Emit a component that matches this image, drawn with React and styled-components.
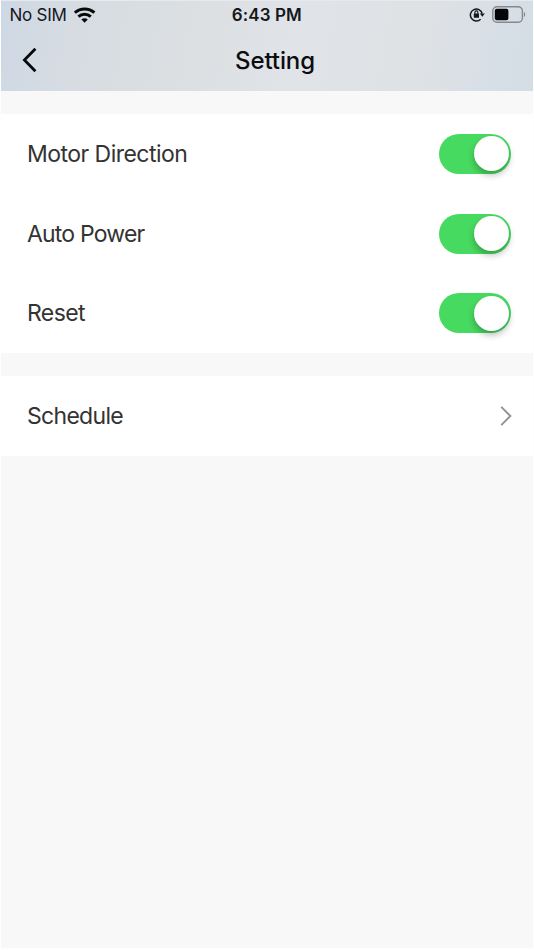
import React, { useState } from 'react';
import styled, { createGlobalStyle } from 'styled-components';

const GlobalStyle = createGlobalStyle`
  * {
    box-sizing: border-box;
  }

  body {
    margin: 0;
    background-color: #fefefe;
    font-family: Inter, Roboto, sans-serif;
  }
`

const Page = styled.div`
  height: 950px;
  padding: 0 1px 2px;
  display: flex;
  flex-direction: column;
`

const Header = styled.header`
  height: 91px;
  flex-shrink: 0;
  border-top: 1px solid #e6eaed;
  background: linear-gradient(100deg, #ced8e4 0%, #d6dce2 14%, #dbdfe2 35%, #e0e3e7 55%, #dfe2e5 78%, #d6dee6 93%, #d4dce4 100%);
`

const StatusBar = styled.div`
  height: 28px;
  padding: 0 7px 0 8.5px;
  display: grid;
  grid-template-columns: 1fr auto 1fr;
  align-items: center;
  color: #14171b;
`

const StatusGroup = styled.div`
  display: flex;
  align-items: center;
  justify-content: ${(props) => (props.$end ? 'flex-end' : 'flex-start')};
  gap: 7px;

  svg {
    margin-bottom: 1px;
  }
`

const Carrier = styled.span`
  font-size: 17px;
  line-height: 28px;
  letter-spacing: -0.25px;
`

const Clock = styled.span`
  margin-right: 2px;
  font-size: 17px;
  font-weight: 600;
  line-height: 28px;
  letter-spacing: 0.1px;
`

const NavBar = styled.div`
  height: 62px;
  padding: 0 20px;
  display: grid;
  grid-template-columns: 32px 1fr 16px;
  align-items: center;
`

const BackButton = styled.button`
  width: 20px;
  height: 30px;
  padding: 0;
  border: none;
  background: none;
  cursor: pointer;

  svg {
    display: block;
  }
`

const Title = styled.h1`
  margin: 2px 0 0;
  font-size: 24px;
  font-weight: 500;
  line-height: 30px;
  letter-spacing: -0.1px;
  text-align: center;
  color: #0b0d10;
`

const Content = styled.main`
  flex: 1;
  padding-top: 23px;
  display: flex;
  flex-direction: column;
  gap: 23px;
  background-color: #f8f8f8;
`

const Group = styled.section`
  background-color: #fff;
`

const Row = styled.div`
  height: ${(props) => props.$height || '79.7px'};
  padding: 0 22px 0 26px;
  display: flex;
  align-items: center;
  justify-content: space-between;
`

const Label = styled.span`
  font-size: 23px;
  line-height: 30px;
  letter-spacing: ${(props) => props.$spacing || '-0.6px'};
  color: #333;
`

const Switch = styled.button`
  width: 72.5px;
  height: 40px;
  padding: 0 2.5px;
  display: flex;
  align-items: center;
  justify-content: ${(props) => (props.$on ? 'flex-end' : 'flex-start')};
  border: none;
  border-radius: 20px;
  background-color: ${(props) => (props.$on ? '#47da60' : '#e5e5e5')};
  cursor: pointer;
`

const Knob = styled.span`
  width: 35px;
  height: 35px;
  border-radius: 50%;
  background-color: #fff;
  box-shadow: 0 4px 7px rgba(0, 0, 0, 0.27);
`

const Arrow = styled.svg`
  margin-right: -1px;
`

const WifiIcon = () => (
  <svg width="22" height="16" viewBox="0 0 22 16" fill="none" stroke="#08090b" strokeWidth="3">
    <path d="M.8 5.7C6.4 .6 14.8 .6 20.4 5.7" />
    <path d="M4.4 9.7C8 6.4 13.2 6.4 16.8 9.7" />
    <path d="M10.6 15.8L7.4 12.5C9.2 10.9 12 10.9 13.8 12.5Z" fill="#08090b" stroke="none" />
  </svg>
)

const RotationLockIcon = () => (
  <svg width="16" height="15" viewBox="0 0 16 15" fill="none" stroke="#14171b">
    <path d="M11.6 12.3A6 6 0 1 1 13.2 6.5" strokeWidth="1.5" />
    <path d="M10.8 6.5H15.8L13.3 9.8Z" fill="#14171b" stroke="none" />
    <rect x="4.8" y="6.6" width="5.2" height="4.2" rx=".6" fill="#14171b" stroke="none" />
    <path d="M5.9 7V5.5A1.5 1.6 0 0 1 8.9 5.5V7" strokeWidth="1.1" />
  </svg>
)

const BatteryIcon = () => (
  <svg width="34" height="18" viewBox="0 0 34 18">
    <rect x=".8" y=".8" width="29.6" height="15.4" rx="4.2" fill="none" stroke="#85898e" strokeWidth="1.4" />
    <rect x="2.8" y="2.8" width="13.6" height="11.4" rx="2" fill="#050607" />
    <path d="M31.9 6C33.6 6.6 33.6 10.3 31.9 10.9Z" fill="#85898e" />
  </svg>
)

const BackIcon = () => (
  <svg width="20" height="30" viewBox="0 0 20 30" fill="none" stroke="#07090c" strokeWidth="2.8">
    <path d="M14.4 3.8L3.4 15L14.4 26.2" />
  </svg>
)

const ArrowIcon = () => (
  <Arrow width="12" height="20" viewBox="0 0 12 20" fill="none" stroke="#929292" strokeWidth="1.9">
    <path d="M1.2 .8L10.4 10L1.2 19.2" />
  </Arrow>
)

const options = [
  { id: 'motor', label: 'Motor Direction', spacing: '-0.53px' },
  { id: 'power', label: 'Auto Power', spacing: '-0.8px' },
  { id: 'reset', label: 'Reset' },
]

const App = () => {
  const [values, setValues] = useState({ motor: true, power: true, reset: true });

  const toggle = (id) => {
    setValues({ ...values, [id]: !values[id] });
  };

  return (
    <>
      <GlobalStyle />
      <Page>
        <Header>
          <StatusBar>
            <StatusGroup>
              <Carrier>No SIM</Carrier>
              <WifiIcon />
            </StatusGroup>
            <Clock>6:43 PM</Clock>
            <StatusGroup $end>
              <RotationLockIcon />
              <BatteryIcon />
            </StatusGroup>
          </StatusBar>
          <NavBar>
            <BackButton aria-label="Back">
              <BackIcon />
            </BackButton>
            <Title>Setting</Title>
          </NavBar>
        </Header>
        <Content>
          <Group>
            {options.map(({ id, label, spacing }) => (
              <Row key={id}>
                <Label $spacing={spacing}>{label}</Label>
                <Switch
                  role="switch"
                  aria-label={label}
                  aria-checked={values[id]}
                  $on={values[id]}
                  onClick={() => toggle(id)}
                >
                  <Knob />
                </Switch>
              </Row>
            ))}
          </Group>
          <Group>
            <Row $height="80px">
              <Label $spacing="-0.7px">Schedule</Label>
              <ArrowIcon />
            </Row>
          </Group>
        </Content>
      </Page>
    </>
  );
};

export default App;
